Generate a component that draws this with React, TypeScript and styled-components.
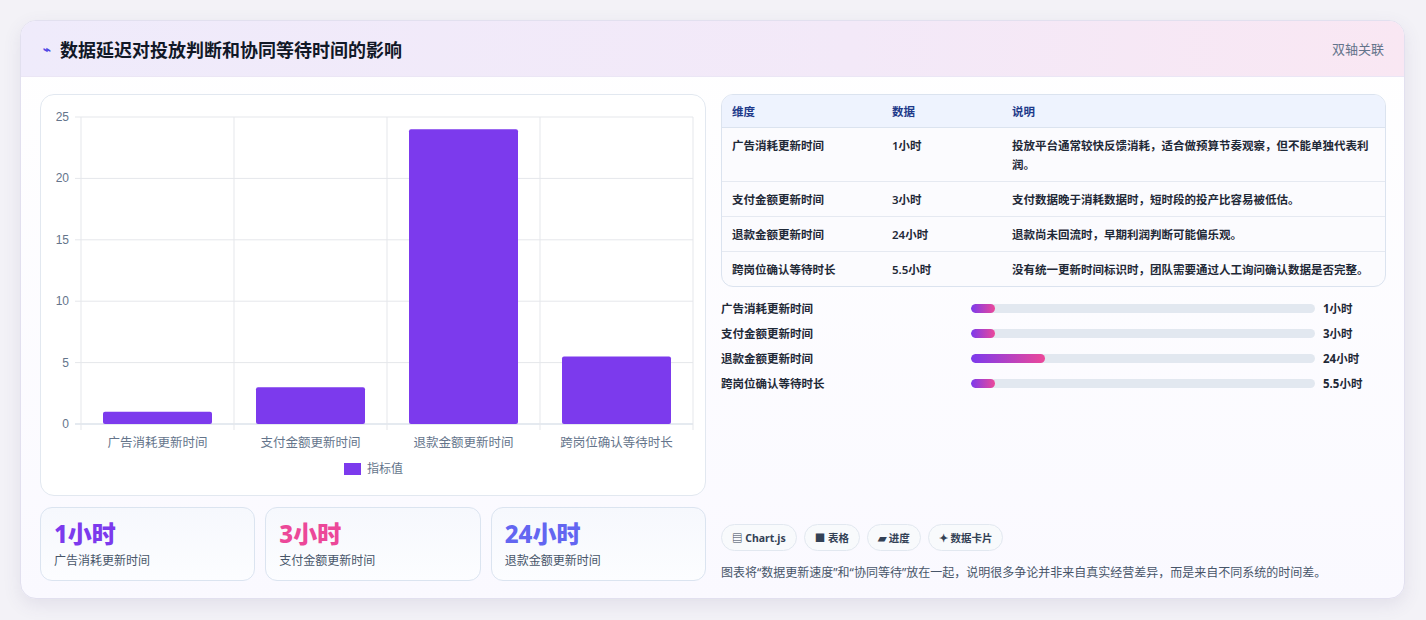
import React from "react";
import styled, { createGlobalStyle } from "styled-components";

const GlobalStyle = createGlobalStyle`
  html, body { margin: 0; padding: 0; background: #f3f2f7; }
  body { font-family: "Noto Sans", "Noto Sans CJK SC", sans-serif; color: #1e293b; }
`;

interface IRow {
  name: string;
  value: number;
  unit: string;
  note: string;
}

const rows: IRow[] = [
  { name: "广告消耗更新时间", value: 1, unit: "1小时", note: "投放平台通常较快反馈消耗，适合做预算节奏观察，但不能单独代表利润。" },
  { name: "支付金额更新时间", value: 3, unit: "3小时", note: "支付数据晚于消耗数据时，短时段的投产比容易被低估。" },
  { name: "退款金额更新时间", value: 24, unit: "24小时", note: "退款尚未回流时，早期利润判断可能偏乐观。" },
  { name: "跨岗位确认等待时长", value: 5.5, unit: "5.5小时", note: "没有统一更新时间标识时，团队需要通过人工询问确认数据是否完整。" },
];

const barWidths = [7, 7, 21.5, 7];

function BarChart() {
  const left = 40;
  const top = 22;
  const w = 612;
  const h = 307;
  const colW = w / 4;
  const y = (v: number) => top + h - (v / 25) * h;
  return (
    <svg width="665" height="400" style={{ display: "block" }}>
      {[0, 5, 10, 15, 20, 25].map((t) => (
        <g key={t}>
          <line x1={left - 6} x2={left + w} y1={y(t)} y2={y(t)} stroke={t === 0 ? "#cbd5e1" : "#e5e7eb"} />
          <text x={left - 12} y={y(t) + 4} textAnchor="end" fontSize="12" fill="#64748b" fontFamily="Liberation Sans, sans-serif">{t}</text>
        </g>
      ))}
      {[0, 1, 2, 3, 4].map((i) => (
        <line key={i} x1={left + i * colW} x2={left + i * colW} y1={top} y2={top + h + 6} stroke="#e5e7eb" />
      ))}
      {rows.map((r, i) => (
        <g key={r.name}>
          <rect x={left + i * colW + 22} y={y(r.value)} width={colW - 44} height={top + h - y(r.value)} rx="2" fill="#7c3aed" />
          <text x={left + i * colW + colW / 2} y={top + h + 23} textAnchor="middle" fontSize="12.5" fill="#64748b">{r.name}</text>
        </g>
      ))}
      <rect x="303" y="368" width="17" height="12" fill="#7c3aed" />
      <text x="326" y="378" fontSize="12" fill="#64748b">指标值</text>
    </svg>
  );
}

export default function App() {
  return (
    <>
      <GlobalStyle />
      <Page>
        <Card>
          <Header>
            <Title><Spark>⌁</Spark>数据延迟对投放判断和协同等待时间的影响</Title>
            <Tag>双轴关联</Tag>
          </Header>
          <Body>
            <LeftCol>
              <ChartBox><BarChart /></ChartBox>
              <Stats>
                <Stat><StatValue color="#7c3aed">1小时</StatValue><StatLabel>广告消耗更新时间</StatLabel></Stat>
                <Stat><StatValue color="#ec4899">3小时</StatValue><StatLabel>支付金额更新时间</StatLabel></Stat>
                <Stat><StatValue color="#6366f1">24小时</StatValue><StatLabel>退款金额更新时间</StatLabel></Stat>
              </Stats>
            </LeftCol>
            <RightCol>
              <div>
                <Table>
                  <thead>
                    <tr><Th>维度</Th><Th>数据</Th><Th>说明</Th></tr>
                  </thead>
                  <tbody>
                    {rows.map((r) => (
                      <tr key={r.name}><Td>{r.name}</Td><Td>{r.unit}</Td><Td>{r.note}</Td></tr>
                    ))}
                  </tbody>
                </Table>
                <Bars>
                  {rows.map((r, i) => (
                    <BarRow key={r.name}>
                      <BarLabel>{r.name}</BarLabel>
                      <Track><Fill style={{ width: `${barWidths[i]}%` }} /></Track>
                      <BarValue>{r.unit}</BarValue>
                    </BarRow>
                  ))}
                </Bars>
              </div>
              <div>
                <Chips>
                  <Chip>▤ Chart.js</Chip>
                  <Chip>■ 表格</Chip>
                  <Chip>▰ 进度</Chip>
                  <Chip>✦ 数据卡片</Chip>
                </Chips>
                <Note>图表将“数据更新速度”和“协同等待”放在一起，说明很多争论并非来自真实经营差异，而是来自不同系统的时间差。</Note>
              </div>
            </RightCol>
          </Body>
        </Card>
      </Page>
    </>
  );
}

const Page = styled.div`
  width: 1426px;
  height: 620px;
  padding: 20px 21px 0 20px;
  box-sizing: border-box;
`;

const Card = styled.div`
  height: 579px;
  box-sizing: border-box;
  border: 1px solid #e2e0ef;
  border-radius: 16px;
  background: linear-gradient(180deg, #ffffff 0%, #faf9ff 100%);
  box-shadow: 0 6px 18px rgba(80, 70, 120, 0.1);
  overflow: hidden;
`;

const Header = styled.div`
  height: 55px;
  display: flex;
  align-items: center;
  justify-content: space-between;
  padding: 0 20px 0 22px;
  background: linear-gradient(90deg, #efebfb 0%, #f3e9f8 60%, #f9e7f3 100%);
  border-bottom: 1px solid #ebe6f5;
`;

const Title = styled.h2`
  margin: 0;
  font-size: 18px;
  font-weight: 700;
  color: #111827;
  display: flex;
  align-items: center;
`;

const Spark = styled.span`
  color: #4f46e5;
  font-size: 13px;
  margin-right: 9px;
`;

const Tag = styled.span`
  font-size: 13px;
  color: #64748b;
`;

const Body = styled.div`
  display: flex;
  gap: 15px;
  padding: 17px 18px 18px 19px;
`;

const LeftCol = styled.div`
  width: 666px;
  display: flex;
  flex-direction: column;
  gap: 11px;
`;

const ChartBox = styled.div`
  height: 402px;
  box-sizing: border-box;
  border: 1px solid #e2e8f0;
  border-radius: 14px;
  background: #fff;
  overflow: hidden;
`;

const Stats = styled.div`
  display: grid;
  grid-template-columns: repeat(3, 1fr);
  gap: 10px;
`;

const Stat = styled.div`
  height: 74px;
  box-sizing: border-box;
  border: 1px solid #dbe4f0;
  border-radius: 12px;
  background: linear-gradient(180deg, #f6f8fd, #fcfdff);
  padding: 10px 13px;
`;

const StatValue = styled.div<{ color: string }>`
  font-size: 24px;
  font-weight: 800;
  line-height: 32px;
  color: ${(p) => p.color};
`;

const StatLabel = styled.div`
  font-size: 12px;
  color: #475569;
  margin-top: 1px;
`;

const RightCol = styled.div`
  flex: 1;
  display: flex;
  flex-direction: column;
  justify-content: space-between;
`;

const Table = styled.table`
  width: 100%;
  border-collapse: separate;
  border-spacing: 0;
  border: 1px solid #dbe3ef;
  border-radius: 12px;
  overflow: hidden;
  font-size: 11.5px;
  background: #fbfbfe;
  tbody tr + tr td { border-top: 1px solid #e5e9f1; }
`;

const Th = styled.th`
  text-align: left;
  font-weight: 700;
  color: #1e3a8a;
  background: #eef3fe;
  height: 32px;
  padding: 0 10px;
  border-bottom: 1px solid #dbe3ef;
  &:nth-child(1) { width: 140px; }
  &:nth-child(2) { width: 100px; }
`;

const Td = styled.td`
  padding: 8px 10px 7px;
  color: #1f2937;
  font-weight: 600;
  line-height: 19px;
  vertical-align: top;
`;

const Bars = styled.div`
  display: flex;
  flex-direction: column;
  gap: 5px;
  margin-top: 11px;
`;

const BarRow = styled.div`
  display: flex;
  align-items: center;
  height: 20px;
  font-size: 11.5px;
  font-weight: 700;
  color: #1f2937;
`;

const BarLabel = styled.div`
  width: 250px;
`;

const Track = styled.div`
  width: 344px;
  height: 9px;
  border-radius: 5px;
  background: #e2e8f0;
  overflow: hidden;
`;

const Fill = styled.div`
  height: 100%;
  border-radius: 5px;
  background: linear-gradient(90deg, #7c3aed, #ec4899);
`;

const BarValue = styled.div`
  margin-left: 8px;
`;

const Chips = styled.div`
  display: flex;
  gap: 7px;
`;

const Chip = styled.span`
  height: 27px;
  box-sizing: border-box;
  display: inline-flex;
  align-items: center;
  padding: 0 10px;
  border: 1px solid #e2e8f0;
  border-radius: 14px;
  background: #f8fafc;
  font-size: 10.5px;
  font-weight: 700;
  color: #334155;
`;

const Note = styled.p`
  margin: 12px 0 0;
  font-size: 12px;
  color: #475569;
`;
